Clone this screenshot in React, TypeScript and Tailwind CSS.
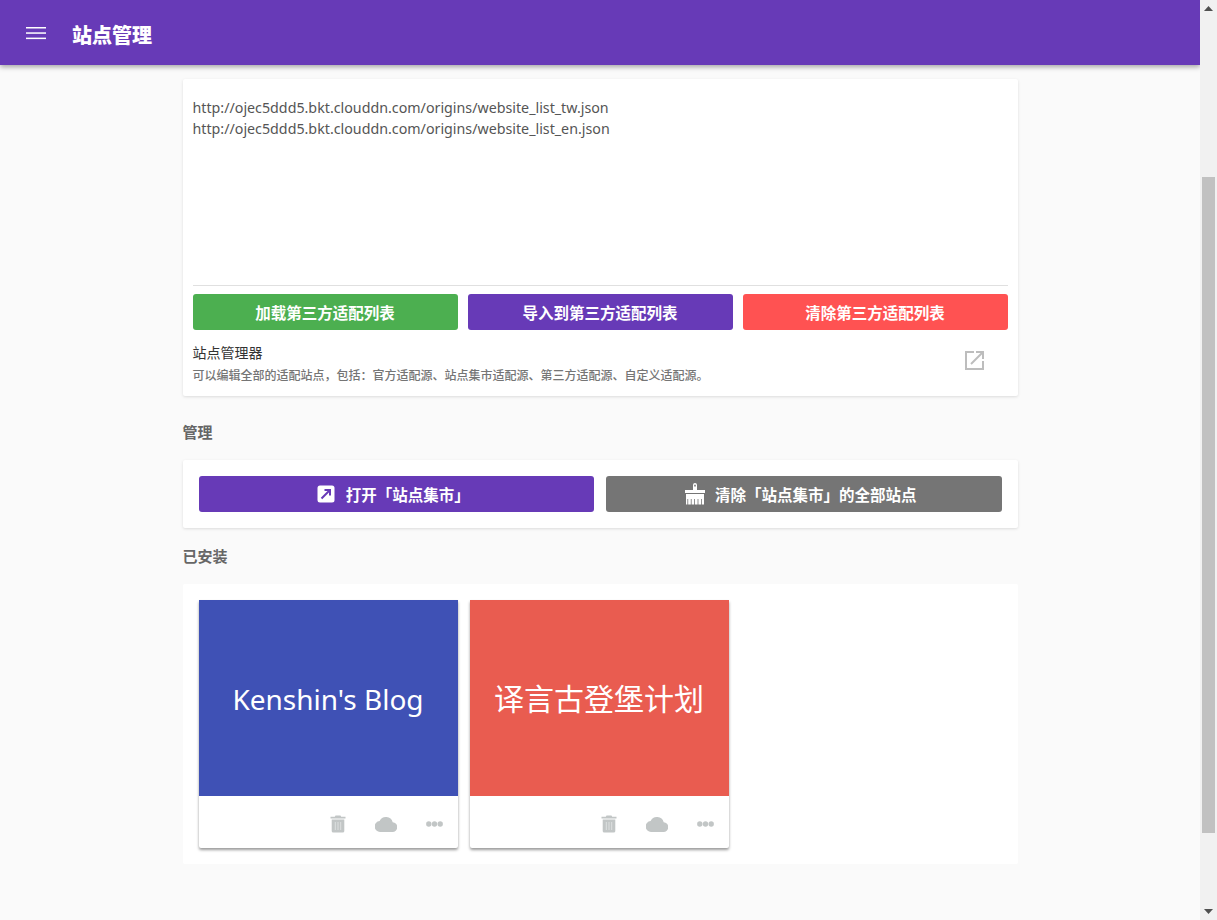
import React from 'react';

const FONT = "font-['Noto_Sans','Noto_Sans_CJK_SC',sans-serif]";

const TrashIcon = () => (
  <svg width="16" height="18" viewBox="0 0 16 18" fill="#c2c6c6">
    <path d="M5.500 0.500h5l.7 1.300H15.500v1.700H.5V1.800h4.300z" />
    <path d="M1.700 4.600h12.600V16a1.600 1.600 0 0 1-1.600 1.600H3.300A1.600 1.600 0 0 1 1.700 16z" />
    <path d="M5.300 7v8M8 7v8M10.700 7v8" stroke="#dde0e0" strokeWidth="1" />
  </svg>
);

const CloudIcon = () => (
  <svg width="22" height="16" viewBox="0 0 22 16" fill="#c2c6c6">
    <path d="M17.700 6.300A7 7 0 0 0 4.600 5.100 5.400 5.400 0 0 0 5.400 15.900h11.900a4.800 4.800 0 0 0 .4-9.600z" />
  </svg>
);

const DotsIcon = () => (
  <svg width="17" height="6" viewBox="0 0 17 6" fill="#c2c6c6">
    <circle cx="2.800" cy="3" r="2.700" />
    <circle cx="8.500" cy="3" r="2.700" />
    <circle cx="14.200" cy="3" r="2.700" />
  </svg>
);

const SiteCard = ({ title, color, size }: { title: string; color: string; size: string }) => (
  <div className="w-[259px] rounded-b-[2px] bg-white shadow-[0_2px_3px_rgba(0,0,0,0.4)]">
    <div className={`flex h-[196px] items-center justify-center pt-[1px] text-white ${size} ${color}`}>{title}</div>
    <div className="flex h-[52px] items-center justify-end pr-[15px] pt-[4px]">
      <span className="flex w-4 justify-center"><TrashIcon /></span>
      <span className="ml-[29px] flex w-[22px] justify-center"><CloudIcon /></span>
      <span className="ml-[29px] flex w-[17px] justify-center"><DotsIcon /></span>
    </div>
  </div>
);

const ListButton = ({ label, color }: { label: string; color: string }) => (
  <button className={`h-9 flex-1 rounded-[3px] pt-[3px] text-[15.5px] font-bold text-white ${color}`}>{label}</button>
);

const App: React.FC = () => {
  return (
    <div className={`flex h-[920px] overflow-hidden bg-[#fafafa] ${FONT}`}>
      <div className="w-[1200px] shrink-0">
        <header className="flex h-[65px] items-center bg-[#673ab7] pl-[26px] shadow-[0_2px_5px_rgba(0,0,0,0.35)]">
          <svg width="20" height="14" viewBox="0 0 20 14" fill="#ffffff">
            <rect y="1" width="20" height="1.500" />
            <rect y="6.300" width="20" height="1.500" />
            <rect y="11.600" width="20" height="1.500" />
          </svg>
          <h1 className="ml-[26px] pt-[6px] text-[20px] font-black text-white">站点管理</h1>
        </header>

        <main className="mx-auto w-[835px] pt-[14px]">
          <section className="rounded-[2px] bg-white px-[10px] pb-[12px] shadow-[0_1px_3px_rgba(0,0,0,0.12)]">
            <textarea
              readOnly
              className="block h-[207px] w-full resize-none border-b border-[#e0e0e0] pt-[18px] text-[14.25px] leading-[21px] text-[#555555] outline-none"
              defaultValue={'http://ojec5ddd5.bkt.clouddn.com/origins/website_list_tw.json\nhttp://ojec5ddd5.bkt.clouddn.com/origins/website_list_en.json'}
            />
            <div className="mt-2 flex gap-[10px]">
              <ListButton label="加载第三方适配列表" color="bg-[#4caf50]" />
              <ListButton label="导入到第三方适配列表" color="bg-[#673ab7]" />
              <ListButton label="清除第三方适配列表" color="bg-[#ff5252]" />
            </div>
            <div className="mt-[13px] flex items-center justify-between">
              <div>
                <div className="text-[14px] leading-[20px] text-[#333333]">站点管理器</div>
                <div className="mt-[4px] text-[12px] font-medium leading-[17px] text-[#757575]">可以编辑全部的适配站点，包括：官方适配源、站点集市适配源、第三方适配源、自定义适配源。</div>
              </div>
              <svg className="mr-[24px] mb-[6px]" width="19" height="19" viewBox="0 0 19 19" fill="none" stroke="#bdbdbd" strokeWidth="2">
                <path d="M9 1H1v17h17v-8" />
                <path d="M6 13L17 2" />
                <path d="M11 1h7v7" />
              </svg>
            </div>
          </section>

          <h2 className="mt-[26px] text-[15px] font-bold leading-[20px] text-[#666666]">管理</h2>

          <section className="mt-[18px] flex gap-3 rounded-[2px] bg-white p-4 shadow-[0_1px_3px_rgba(0,0,0,0.12)]">
            <button className="flex h-9 flex-1 items-center justify-center rounded-[3px] bg-[#673ab7] pr-[6px] text-[15.5px] font-bold text-white">
              <svg width="18" height="18" viewBox="0 0 18 18">
                <rect x="0.500" y="0.500" width="17" height="17" rx="2.500" fill="#ffffff" />
                <path d="M4.500 13.500L12.500 5.500M7.500 5h5.500v5.500" fill="none" stroke="#673ab7" strokeWidth="2" />
              </svg>
              <span className="ml-[11px] pt-[3px]">打开「站点集市」</span>
            </button>
            <button className="flex h-9 flex-1 items-center justify-center rounded-[3px] bg-[#757575] pr-[6px] text-[15.5px] font-bold text-white">
              <svg width="20" height="22" viewBox="0 0 20 22" fill="#ffffff">
                <path fillRule="evenodd" d="M8 7V2a2 2 0 0 1 4 0v5h8v3H0V7zM9.200 1.800v1.600h1.600V1.800z" />
                <path d="M1 11h18v10.500h-2.200V16H16v5.500h-2.600V16h-.8v5.500H10V16h-.8v5.500H6.600V16h-.8v5.500H3.200V16H2.400v5.500H1z" />
              </svg>
              <span className="ml-[10px] pt-[3px]">清除「站点集市」的全部站点</span>
            </button>
          </section>

          <h2 className="mt-[18px] text-[15px] font-bold leading-[20px] text-[#666666]">已安装</h2>

          <section className="mt-[18px] flex h-[280px] gap-3 rounded-[2px] bg-white p-4">
            <SiteCard title="Kenshin's Blog" color="bg-[#3f51b5]" size="text-[28px]" />
            <SiteCard title="译言古登堡计划" color="bg-[#e95c50]" size="text-[30px]" />
          </section>
        </main>
      </div>

      <aside className="flex w-[17px] shrink-0 flex-col bg-[#f1f1f1]">
        <div className="flex h-[17px] items-center justify-center">
          <svg width="9" height="5" viewBox="0 0 9 5" fill="#505050"><path d="M4.500 0L9 5H0z" /></svg>
        </div>
        <div className="mx-[2px] mt-[160px] h-[656px] bg-[#c1c1c1]" />
        <div className="mt-auto flex h-[17px] items-center justify-center">
          <svg width="9" height="5" viewBox="0 0 9 5" fill="#505050"><path d="M0 0h9L4.500 5z" /></svg>
        </div>
      </aside>
    </div>
  );
};

export default App;
